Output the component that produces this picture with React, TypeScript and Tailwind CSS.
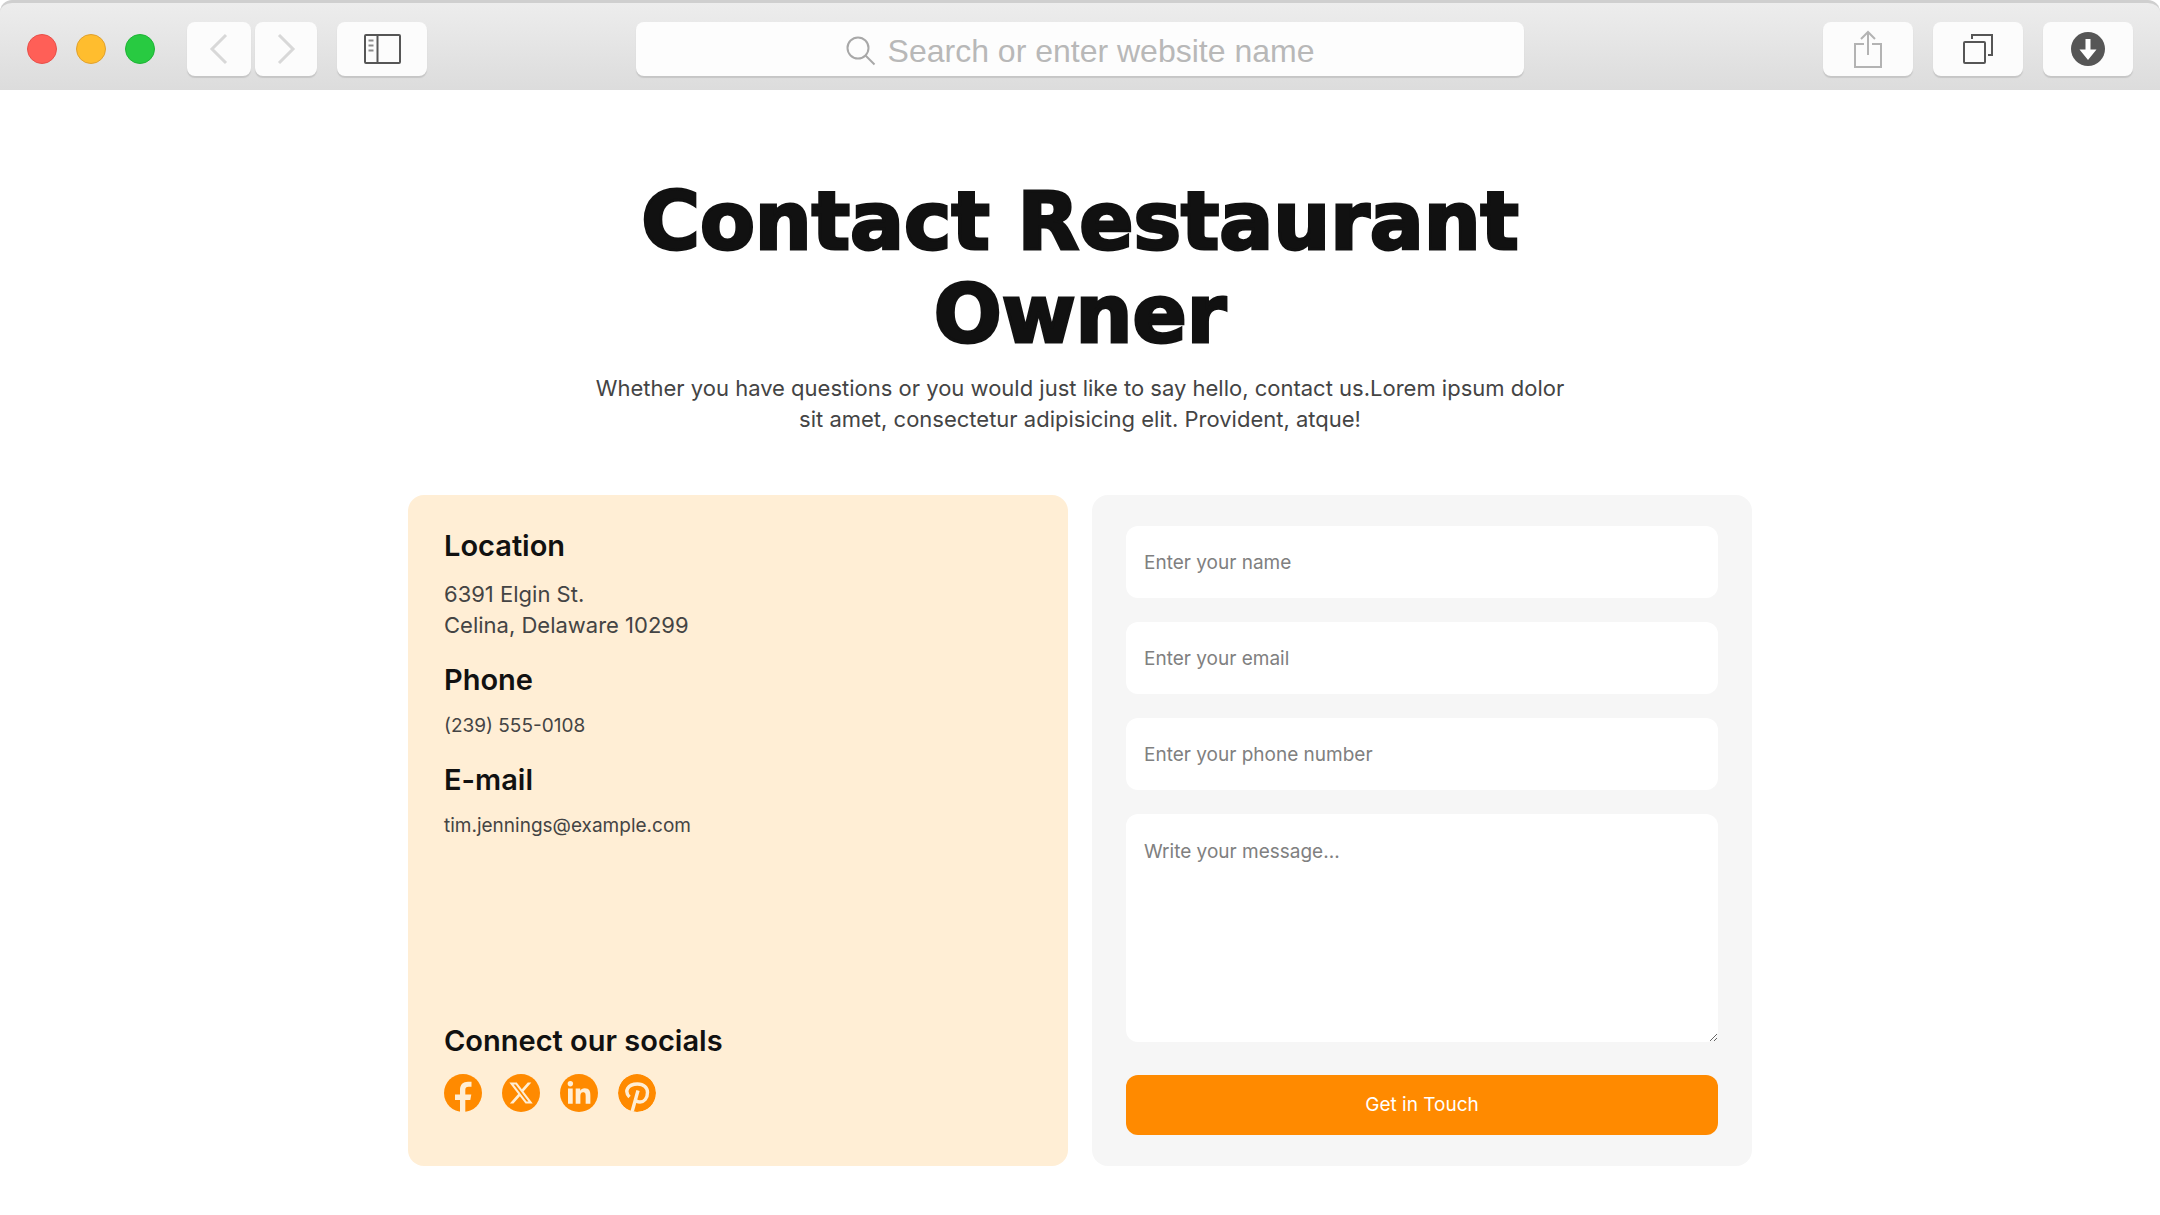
import type { ReactNode } from "react";
import { FaLinkedinIn, FaXTwitter } from "react-icons/fa6";

function ToolbarButton({ label, className, children }: { label: string; className: string; children: ReactNode }) {
  return (
    <button
      type="button"
      aria-label={label}
      className={`flex h-[54px] items-center justify-center rounded-lg bg-[#fcfcfc] shadow-[0_2px_1px_#c6c6c6] ${className}`}
    >
      {children}
    </button>
  );
}

function BrowserBar() {
  return (
    <header className="grid h-[90px] grid-cols-[1fr_minmax(0,888px)_1fr] items-center rounded-t-xl border-t-3 border-[#cfcfcf] bg-linear-to-b from-[#ededed] to-[#dcdcdc] px-[27px] pt-[5px]">
      <div className="flex items-center">
        <div className="mr-8 flex gap-[19px]">
          <span className="size-[30px] rounded-full border border-[#e8504a] bg-[#ff5f57]" />
          <span className="size-[30px] rounded-full border border-[#e0a12e] bg-[#ffbd2e]" />
          <span className="size-[30px] rounded-full border border-[#1fb436] bg-[#28ca41]" />
        </div>
        <div className="mr-5 flex gap-1">
          <ToolbarButton label="Back" className="w-16">
            <svg className="h-8 w-5" viewBox="0 0 20 32" fill="none" stroke="#d8d8d8" strokeWidth="3">
              <path d="M17 2 3 16l14 14" />
            </svg>
          </ToolbarButton>
          <ToolbarButton label="Forward" className="w-[62px]">
            <svg className="h-8 w-5" viewBox="0 0 20 32" fill="none" stroke="#d8d8d8" strokeWidth="3">
              <path d="m3 2 14 14L3 30" />
            </svg>
          </ToolbarButton>
        </div>
        <ToolbarButton label="Show sidebar" className="w-[90px]">
          <svg className="h-[30px] w-[37px]" viewBox="0 0 37 30" fill="none" stroke="#565656" strokeWidth="2">
            <rect x="1" y="1" width="35" height="28" rx="1" />
            <path d="M13.500 1v28" />
            <path d="M4.500 6.500h5M4.500 11.500h5M4.500 16.500h5" stroke="#8c8c8c" />
          </svg>
        </ToolbarButton>
      </div>

      <label className="flex h-[54px] items-center justify-center gap-3 rounded-lg bg-[#fdfdfd] pt-1 shadow-[0_2px_1px_#c6c6c6]">
        <svg className="size-[30px]" viewBox="0 0 30 30" fill="none" stroke="#a8a8a8" strokeWidth="2">
          <circle cx="12" cy="12" r="10.5" />
          <path d="m19.500 19.500 9 9" />
        </svg>
        <input
          type="text"
          aria-label="Address"
          placeholder="Search or enter website name"
          className="field-sizing-content font-['Liberation_Sans',sans-serif] text-[32px] leading-10 outline-none placeholder:text-[#b8b8b8]"
        />
      </label>

      <div className="flex items-center justify-end gap-5">
        <ToolbarButton label="Share" className="w-[90px]">
          <svg className="h-[38px] w-7" viewBox="0 0 28 38" fill="none" stroke="#b3b3b3" strokeWidth="2">
            <path d="M10 14H1v23h26V14h-9M14 25V2M7 9l7-7 7 7" />
          </svg>
        </ToolbarButton>
        <ToolbarButton label="Show all tabs" className="w-[90px]">
          <svg className="size-[30px]" viewBox="0 0 30 30" fill="none" stroke="#565656" strokeWidth="2">
            <rect x="1" y="8" width="21" height="21" rx="1" />
            <path d="M9 5V1h20v20h-4" />
          </svg>
        </ToolbarButton>
        <ToolbarButton label="Downloads" className="w-[90px]">
          <svg className="size-[34px]" viewBox="0 0 34 34">
            <circle cx="17" cy="17" r="17" fill="#565656" />
            <path d="M14.500 7h5v10.500h6L17 28 8.500 17.500h6z" fill="#fff" />
          </svg>
        </ToolbarButton>
      </div>
    </header>
  );
}

function FacebookLogo() {
  return (
    <svg className="size-[38px]" viewBox="0 0 38 38">
      <circle cx="19" cy="19" r="19" fill="#ff8a00" />
      <path
        d="M16 38V26h-5v-5.500h5V16c0-5.500 3-8.300 8-8.300h3.500v5h-3c-2.200 0-3.200 1-3.200 3v4.800h6l-1 5.500h-5v12z"
        fill="#ffeed5"
      />
    </svg>
  );
}

function PinterestLogo() {
  return (
    <svg className="size-[38px] rounded-full" viewBox="0 0 38 38" fill="none">
      <circle cx="19" cy="19" r="19" fill="#ff8a00" />
      <path
        d="M11.500 23C6 17.500 9.500 10 19.500 10c6.500 0 10 4 10 8.500 0 6-3.500 9.500-7.500 9.500-2.600 0-4.200-1.200-4.800-2.600M20 16.500 14 38"
        stroke="#ffeed5"
        strokeWidth="3.4"
      />
    </svg>
  );
}

const cardHeading = "text-[29px] leading-9 font-semibold text-[#111111]";

const fields = [
  { name: "name", type: "text", placeholder: "Enter your name" },
  { name: "email", type: "email", placeholder: "Enter your email" },
  { name: "phone", type: "tel", placeholder: "Enter your phone number" },
];

function ContactDetails() {
  return (
    <section className="flex flex-col justify-between rounded-2xl bg-[#ffeed5] px-9 pt-[33px] pb-[54px] text-[#444444]">
      <div>
        <h2 className={cardHeading}>Location</h2>
        <p className="mt-[15px] text-[22px] leading-[31px]">
          6391 Elgin St.
          <br />
          Celina, Delaware 10299
        </p>
        <h2 className={`mt-[21px] ${cardHeading}`}>Phone</h2>
        <p className="mt-[14px] text-[19px] leading-7">(239) 555-0108</p>
        <h2 className={`mt-[22px] ${cardHeading}`}>E-mail</h2>
        <p className="mt-[14px] text-[19px] leading-7">tim.jennings@example.com</p>
      </div>
      <div>
        <h2 className={cardHeading}>Connect our socials</h2>
        <div className="mt-[15px] flex gap-5">
          <a href="#facebook" aria-label="Facebook">
            <FacebookLogo />
          </a>
          <a href="#x" aria-label="X" className="flex size-[38px] items-center justify-center rounded-full bg-[#ff8a00]">
            <FaXTwitter className="size-[26px] text-[#ffeed5]" />
          </a>
          <a
            href="#linkedin"
            aria-label="LinkedIn"
            className="flex size-[38px] items-center justify-center rounded-full bg-[#ff8a00] pt-0.5"
          >
            <FaLinkedinIn className="size-[26px] text-[#ffeed5]" />
          </a>
          <a href="#pinterest" aria-label="Pinterest">
            <PinterestLogo />
          </a>
        </div>
      </div>
    </section>
  );
}

function ContactForm() {
  return (
    <form className="flex flex-col gap-6 rounded-2xl bg-[#f6f6f6] px-[34px] py-[31px] text-[19px]">
      {fields.map((field) => (
        <input
          key={field.name}
          name={field.name}
          type={field.type}
          aria-label={field.placeholder}
          placeholder={field.placeholder}
          className="h-[72px] rounded-xl bg-white px-[18px] outline-none placeholder:text-[#808080]"
        />
      ))}
      <textarea
        name="message"
        aria-label="Message"
        placeholder="Write your message..."
        className="h-[228px] rounded-xl bg-white px-[18px] py-6 leading-7 outline-none placeholder:text-[#808080]"
      />
      <button type="submit" className="mt-[9px] h-[60px] rounded-xl bg-[#ff8a00] text-white">
        Get in Touch
      </button>
    </form>
  );
}

export default function App() {
  return (
    <div className="bg-white font-['Inter',sans-serif]">
      <BrowserBar />
      <main className="mx-auto max-w-[1344px] pt-[85px] pb-12">
        <div className="mx-auto max-w-[984px] text-center">
          <h1 className="font-['DejaVu_Sans',sans-serif] text-[80px] leading-[93px] font-bold text-[#111111] [-webkit-text-stroke:3px_#111111]">
            Contact Restaurant
            <br />
            Owner
          </h1>
          <p className="mt-3 text-[22px] leading-[31px] text-[#444444]">
            Whether you have questions or you would just like to say hello, contact us.Lorem ipsum dolor
            <br />
            sit amet, consectetur adipisicing elit. Provident, atque!
          </p>
        </div>
        <div className="mt-[60px] grid gap-6 md:grid-cols-2">
          <ContactDetails />
          <ContactForm />
        </div>
      </main>
    </div>
  );
}
